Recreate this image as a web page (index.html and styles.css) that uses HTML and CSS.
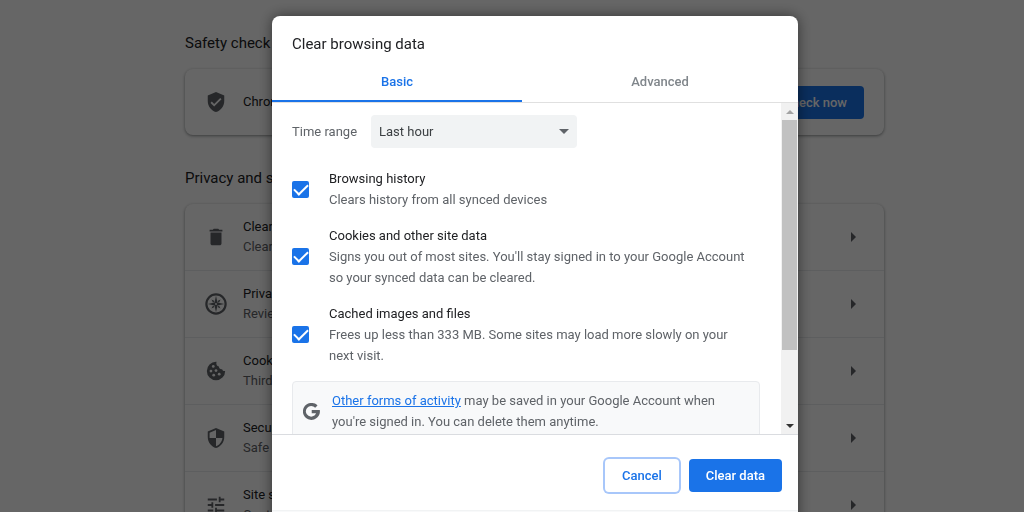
FILE: index.html
```html
<!DOCTYPE html>
<html lang="en">
<head>
    <meta charset="UTF-8">
    <meta name="viewport" content="width=device-width, initial-scale=1.0">
    <title>Settings - Clear browsing data</title>
    <link rel="stylesheet" href="styles.css">
</head>
<body>
    <!-- Settings page -->
    <main class="settings">
        <h2>Safety check</h2>
        <div class="card">
            <div class="row">
                <svg class="icon" viewBox="0 0 24 24"><path d="M12 1 3 5v6c0 5.55 3.84 10.74 9 12 5.16-1.26 9-6.45 9-12V5l-9-4zm-2 16-4-4 1.41-1.41L10 14.17l6.59-6.59L18 9l-8 8z"/></svg>
                <div class="row-text">Chrome can help keep you safe</div>
                <button class="btn primary">Check now</button>
            </div>
        </div>

        <h2>Privacy and security</h2>
        <div class="card">
            <div class="row">
                <svg class="icon" viewBox="0 0 24 24"><path d="M6 19c0 1.1.9 2 2 2h8c1.1 0 2-.9 2-2V7H6v12zM19 4h-3.5l-1-1h-5l-1 1H5v2h14V4z"/></svg>
                <div class="row-text">Clear browsing data<p>Clear history, cookies, cache</p></div>
                <span class="arrow"></span>
            </div>
            <div class="row">
                <svg class="icon" viewBox="0 0 24 24">
                    <circle cx="12" cy="12" r="10.5" fill="none" stroke="#5f6368" stroke-width="2.4"/>
                    <path d="m12 3 1.6 7.4L21 12l-7.4 1.6L12 21l-1.6-7.4L3 12l7.4-1.6z"/>
                    <path d="m7 7 3.500 1.800-1.700 1.700zM17 7l-1.800 3.500-1.700-1.700zM17 17l-3.500-1.800 1.700-1.700zM7 17l1.800-3.500 1.700 1.700z"/>
                    <circle cx="12" cy="12" r="1" fill="#fff"/>
                </svg>
                <div class="row-text">Privacy Guide<p>Review key privacy controls</p></div>
                <span class="arrow"></span>
            </div>
            <div class="row">
                <svg class="icon" viewBox="0 0 24 24">
                    <path d="M12 2a10 10 0 1 0 10 10c-1.5.3-3-.5-3.3-2-1.8.4-3.7-1-3.5-3-2 .1-3.5-2-2.6-5z"/>
                    <g fill="#fff"><circle cx="9" cy="7" r="1.5"/><circle cx="6.5" cy="12" r="1.5"/><circle cx="12" cy="11.5" r="1.5"/><circle cx="9.5" cy="16.5" r="1.5"/><circle cx="15.5" cy="15.5" r="1.5"/></g>
                </svg>
                <div class="row-text">Cookies and other site data<p>Third-party cookies are blocked</p></div>
                <span class="arrow"></span>
            </div>
            <div class="row">
                <svg class="icon" viewBox="0 0 24 24"><path d="M12 1 3 5v6c0 5.55 3.84 10.74 9 12 5.16-1.26 9-6.45 9-12V5l-9-4zm0 10.99h7c-.53 4.12-3.28 7.79-7 8.94V12H5V6.3l7-3.11v8.8z"/></svg>
                <div class="row-text">Security<p>Safe Browsing and other settings</p></div>
                <span class="arrow"></span>
            </div>
            <div class="row">
                <svg class="icon" viewBox="0 0 24 24"><path d="M3 17v2h6v-2H3zM3 5v2h10V5H3zm10 16v-2h8v-2h-8v-2h-2v6h2zM7 9v2H3v2h4v2h2V9H7zm14 4v-2H11v2h10zm-6-4h2V7h4V5h-4V3h-2v6z"/></svg>
                <div class="row-text">Site settings<p>Controls what information sites can use</p></div>
                <span class="arrow"></span>
            </div>
        </div>
    </main>

    <!-- Clear browsing data dialog -->
    <div class="overlay">
        <div class="dialog" role="dialog" aria-labelledby="dialogTitle">
            <h1 id="dialogTitle">Clear browsing data</h1>
            <div class="tabs" role="tablist">
                <button class="tab active" role="tab">Basic</button>
                <button class="tab" role="tab">Advanced</button>
            </div>
            <div class="dialog-body">
                <div class="content">
                    <div class="time-range">
                        <label for="timeRange">Time range</label>
                        <div class="select-wrap">
                            <select id="timeRange">
                                <option>Last hour</option>
                                <option>Last 24 hours</option>
                                <option>Last 7 days</option>
                                <option>Last 4 weeks</option>
                                <option>All time</option>
                            </select>
                        </div>
                    </div>
                    <div class="option">
                        <input type="checkbox" id="history" checked>
                        <label for="history">Browsing history<span>Clears history from all synced devices</span></label>
                    </div>
                    <div class="option">
                        <input type="checkbox" id="cookies" checked>
                        <label for="cookies">Cookies and other site data<span>Signs you out of most sites. You'll stay signed in to your Google Account so your synced data can be cleared.</span></label>
                    </div>
                    <div class="option">
                        <input type="checkbox" id="cache" checked>
                        <label for="cache">Cached images and files<span>Frees up less than 333 MB. Some sites may load more slowly on your next visit.</span></label>
                    </div>
                    <div class="notice">
                        <svg class="google" viewBox="0 0 24 24"><path d="M20.500 3.500 17.200 6.800A7.500 7.500 0 1 0 18.500 14.500H12.300V9.800H23.700A12 12 0 1 1 20.500 3.500z"/></svg>
                        <p><a href="#">Other forms of activity</a> may be saved in your Google Account when you're signed in. You can delete them anytime.</p>
                    </div>
                </div>
                <div class="scrollbar">
                    <span class="up"></span>
                    <div class="thumb"></div>
                    <span class="down"></span>
                </div>
            </div>
            <div class="actions">
                <button class="btn cancel">Cancel</button>
                <button class="btn primary">Clear data</button>
            </div>
            <div class="sync-footer"></div>
        </div>
    </div>
</body>
</html>
```
FILE: styles.css
```css
* {
    box-sizing: border-box;
}
body {
    margin: 0;
    height: 100vh;
    overflow: hidden;
    font-family: Roboto, sans-serif;
    font-size: 13px;
    line-height: 20px;
    color: #202124;
    background-color: #fff;
}
h1, h2, p {
    margin: 0;
    font-weight: 400;
}
button, select {
    font-family: inherit;
    font-size: 13px;
}

/* settings page */
.settings {
    height: 100vh;
    overflow: hidden;
    padding: 31px 140px 0 185px;
}
h2 {
    font-size: 15px;
    line-height: 24px;
    margin-bottom: 14px;
}
.card {
    margin-bottom: 31px;
    border-radius: 8px;
    background-color: #fff;
    box-shadow: 0 1px 2px rgba(60, 64, 67, 0.3), 0 1px 3px 1px rgba(60, 64, 67, 0.2);
}
.row {
    display: flex;
    align-items: center;
    min-height: 66px;
    padding: 0 20px;
}
.row + .row {
    min-height: 67px;
    border-top: 1px solid #e8eaed;
}
.icon {
    width: 22px;
    height: 22px;
    margin-right: 16px;
    fill: #5f6368;
}
.row-text {
    flex: 1;
}
.row-text p {
    color: #5f6368;
}
.arrow {
    margin-right: 8px;
    border: 5px solid transparent;
    border-left-color: #5f6368;
    border-right-width: 0;
}
.btn {
    height: 33px;
    padding: 0 17px;
    border: none;
    border-radius: 4px;
    font-weight: 500;
    cursor: pointer;
}
.primary {
    color: #fff;
    background-color: #1a73e8;
}

/* dialog */
.overlay {
    position: fixed;
    inset: 0;
    display: flex;
    justify-content: center;
    align-items: flex-start;
    overflow: hidden;
    padding: 16px 0 0 46px;
    background-color: rgba(0, 0, 0, 0.6);
}
.dialog {
    width: 526px;
    border-radius: 8px;
    overflow: hidden;
    background-color: #fff;
    box-shadow: 0 0 14px rgba(0, 0, 0, 0.5);
}
h1 {
    padding: 16px 20px 8px;
    font-size: 15px;
    line-height: 24px;
}
.tabs {
    display: flex;
    height: 39px;
    border-bottom: 1px solid #e0e0e0;
}
.tab {
    flex: 1;
    padding: 0 0 3px;
    border: none;
    font-weight: 500;
    color: #80868b;
    background: none;
}
.tab.active {
    flex: 0 0 250px;
    padding-bottom: 1px;
    border-bottom: 2px solid #1a73e8;
    color: #1a73e8;
}
.dialog-body {
    display: flex;
    height: 332px;
    overflow: hidden;
    border-bottom: 1px solid #dadce0;
}
.content {
    flex: 1;
    padding: 12px 21px 0 20px;
}
.time-range {
    display: flex;
    align-items: center;
    gap: 14px;
    margin-bottom: 20px;
    color: #5f6368;
}
.select-wrap {
    position: relative;
    width: 206px;
}
.select-wrap::after {
    content: "";
    position: absolute;
    top: 14px;
    right: 8px;
    border: 5px solid transparent;
    border-top-color: #5f6368;
    border-bottom-width: 0;
    pointer-events: none;
}
select {
    width: 100%;
    height: 33px;
    padding: 0 8px;
    border: none;
    border-radius: 4px;
    color: #3c4043;
    background-color: #f1f3f4;
    appearance: none;
}
.option {
    display: flex;
    align-items: center;
    gap: 20px;
    margin-bottom: 15px;
    padding-right: 12px;
    line-height: 21px;
}
.option span {
    display: block;
    color: #5f6368;
}
.option input {
    flex: none;
    appearance: none;
    display: grid;
    place-items: center;
    width: 17px;
    height: 17px;
    margin: 0;
    border-radius: 2px;
    background-color: #1a73e8;
}
.option input:checked::before {
    content: "";
    width: 6px;
    height: 12px;
    margin-bottom: 4px;
    border: solid #fff;
    border-width: 0 2px 2px 0;
    transform: rotate(45deg);
}
.notice {
    display: flex;
    align-items: center;
    gap: 12px;
    padding: 8px 10px;
    border: 1px solid #e8eaed;
    border-radius: 4px;
    line-height: 21px;
    color: #5f6368;
    background-color: #f8f9fa;
}
.notice a {
    color: #1a73e8;
}
.google {
    flex: none;
    width: 17px;
    height: 17px;
    fill: #5f6368;
}
.scrollbar {
    display: flex;
    flex-direction: column;
    align-items: center;
    width: 17px;
    background-color: #f1f1f1;
}
.up, .down {
    margin: 7px 0 6px;
    border: 4px solid transparent;
}
.up {
    border-top-width: 0;
    border-bottom-color: #a3a3a3;
}
.down {
    margin-top: auto;
    border-bottom-width: 0;
    border-top-color: #333;
}
.thumb {
    width: 15px;
    height: 230px;
    background-color: #c1c1c1;
}
.actions {
    display: flex;
    justify-content: flex-end;
    gap: 10px;
    padding: 24px 16px 18px;
}
.cancel {
    color: #1a73e8;
    background-color: #fff;
    box-shadow: 0 0 0 2px #a8c7fa;
}
.sync-footer {
    height: 48px;
    border-top: 1px solid #f1f3f4;
    background-color: #f8f9fa;
}
```
